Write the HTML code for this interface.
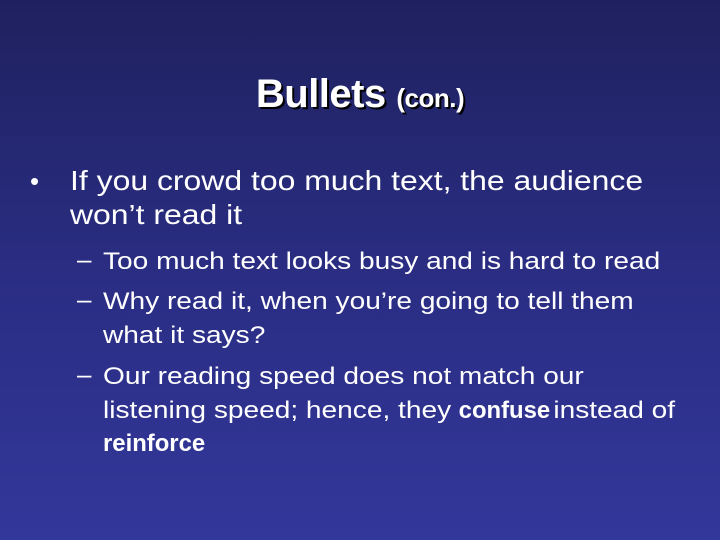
<html><head><style>
body{margin:0;width:720px;height:540px;overflow:hidden;background:linear-gradient(#1f215f,#2a2d82 50%,#33379a);font-family:"Liberation Sans",Arial,sans-serif;color:#fff;position:relative}
.t{position:absolute;left:0;width:720px;text-align:center;top:72px;font-family:"Liberation Sans Narrow","Liberation Sans",sans-serif;font-weight:bold;font-size:40px;text-shadow:2px 2px 0 #000;letter-spacing:-0.5px}
.t small{font-size:26px}
.l{position:absolute;white-space:nowrap;transform-origin:0 0}
.b{font-size:28px;transform:scaleX(1.14)}
.s{font-size:24px;transform:scaleX(1.17)}
.n{font-family:"Liberation Sans Narrow","Liberation Sans",sans-serif;font-weight:bold;display:inline-block;transform:scaleX(0.85);transform-origin:0 0;margin-right:-18px}
</style></head><body>
<div class="t">Bullets <small>(con.)</small></div>
<div class="l" style="left:30px;top:166px;font-size:26px">•</div>
<div class="l b" style="left:70px;top:165px">If you crowd too much text, the audience</div>
<div class="l b" style="left:70px;top:199px">won’t read it</div>
<div class="l" style="left:77px;top:244px;font-size:26px">–</div>
<div class="l s" style="left:103px;top:248px">Too much text looks busy and is hard to read</div>
<div class="l" style="left:77px;top:284px;font-size:26px">–</div>
<div class="l s" style="left:103px;top:288px">Why read it, when you’re going to tell them</div>
<div class="l s" style="left:103px;top:322px">what it says?</div>
<div class="l" style="left:77px;top:359px;font-size:26px">–</div>
<div class="l s" style="left:103px;top:363px">Our reading speed does not match our</div>
<div class="l s" style="left:103px;top:397px">listening speed; hence, they <span class="n">confuse</span> instead of</div>
<div class="l s" style="left:103px;top:430px"><span class="n">reinforce</span></div>
</body></html>
